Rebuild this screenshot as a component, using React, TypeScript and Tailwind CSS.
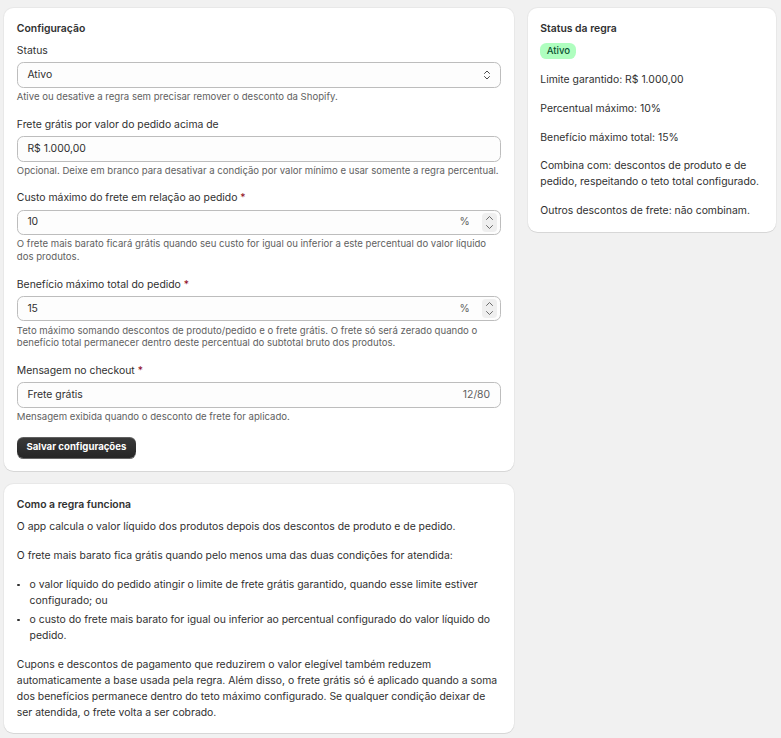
import React from "react";

function ChevUpDown() {
  return (
    <svg width="10" height="12" viewBox="0 0 10 12" fill="none" stroke="#4a4a4a" strokeWidth="1" strokeLinecap="round" strokeLinejoin="round">
      <path d="M2.5 4.5 L5 2 L7.5 4.5" />
      <path d="M2.5 7.5 L5 10 L7.5 7.5" />
    </svg>
  );
}

function Spinner() {
  return (
    <div className="flex h-[19px] w-[15px] flex-col items-center justify-between rounded-[4px] bg-[#efefef] py-[2px]">
      <svg width="9" height="6" viewBox="0 0 9 6" fill="none" stroke="#5a5a5a" strokeWidth="0.9" strokeLinecap="round" strokeLinejoin="round">
        <path d="M1.5 4.5 L4.5 1.5 L7.5 4.5" />
      </svg>
      <svg width="9" height="6" viewBox="0 0 9 6" fill="none" stroke="#5a5a5a" strokeWidth="0.9" strokeLinecap="round" strokeLinejoin="round">
        <path d="M1.5 1.5 L4.5 4.5 L7.5 1.5" />
      </svg>
    </div>
  );
}

function Label({ children, required }: { children: React.ReactNode; required?: boolean }) {
  return (
    <div className="text-[10.4px] leading-[16px] text-[#303030]">
      {children}
      {required && <span className="text-[#8e0b21]"> *</span>}
    </div>
  );
}

function Help({ children }: { children: React.ReactNode }) {
  return <div className="mt-[3.2px] text-[9.6px] leading-[12.8px] text-[#616161]">{children}</div>;
}

function Box({ children }: { children: React.ReactNode }) {
  return (
    <div className="mt-[3.2px] flex h-[25.6px] items-center rounded-[6.4px] border border-[#bdbdbd] bg-[#fdfdfd] pl-[9.6px] pr-[3px] text-[10.4px] text-[#303030]">
      {children}
    </div>
  );
}

function Bullet({ children }: { children: React.ReactNode }) {
  return (
    <li className="flex">
      <span className="flex w-[12.8px] shrink-0 pt-[7px]">
        <span className="ml-[0.5px] h-[2.6px] w-[2.6px] rounded-full bg-[#303030]" />
      </span>
      <span>{children}</span>
    </li>
  );
}

const card =
  "rounded-[9.6px] bg-white p-[12.8px] shadow-[0_1px_0_0_rgba(26,26,26,0.08),0_0_0_1px_rgba(0,0,0,0.035)]";

export default function App() {
  return (
    <div className="min-h-[738px] bg-[#f1f1f1] pl-[4px] pt-[8px] font-['Inter',sans-serif] text-[#303030]">
      <div className="grid grid-cols-[509.5px_248.8px] items-start gap-x-[14px]">
        <div className="flex flex-col gap-[12.8px]">
          <div className={card}>
            <div className="text-[10.4px] font-semibold leading-[16px]">Configuração</div>
            <div className="mt-[6.4px] flex flex-col gap-[12.8px]">
              <div>
                <Label>Status</Label>
                <Box>
                  <span className="flex-1">Ativo</span>
                  <span className="mr-[5px] flex items-center">
                    <ChevUpDown />
                  </span>
                </Box>
                <Help>Ative ou desative a regra sem precisar remover o desconto da Shopify.</Help>
              </div>
              <div>
                <Label>Frete grátis por valor do pedido acima de</Label>
                <Box>
                  <span className="flex-1">R$ 1.000,00</span>
                </Box>
                <Help>Opcional. Deixe em branco para desativar a condição por valor mínimo e usar somente a regra percentual.</Help>
              </div>
              <div>
                <Label required>Custo máximo do frete em relação ao pedido</Label>
                <Box>
                  <span className="flex-1">10</span>
                  <span className="mr-[12px] text-[#616161]">%</span>
                  <Spinner />
                </Box>
                <Help>
                  O frete mais barato ficará grátis quando seu custo for igual ou inferior a este percentual do valor líquido dos produtos.
                </Help>
              </div>
              <div>
                <Label required>Benefício máximo total do pedido</Label>
                <Box>
                  <span className="flex-1">15</span>
                  <span className="mr-[12px] text-[#616161]">%</span>
                  <Spinner />
                </Box>
                <Help>
                  Teto máximo somando descontos de produto/pedido e o frete grátis. O frete só será zerado quando o benefício total permanecer dentro deste percentual do subtotal bruto dos produtos.
                </Help>
              </div>
              <div>
                <Label required>Mensagem no checkout</Label>
                <Box>
                  <span className="flex-1">Frete grátis</span>
                  <span className="mr-[6.6px] text-[#616161]">12/80</span>
                </Box>
                <Help>Mensagem exibida quando o desconto de frete for aplicado.</Help>
              </div>
              <div className="flex">
                <button className="h-[21.6px] rounded-[6.4px] bg-gradient-to-b from-[#3a3a3a] to-[#262626] px-[9.6px] text-[9.6px] font-[650] leading-[12px] text-white shadow-[0_1px_0_0_rgba(0,0,0,0.6),inset_0_1px_0_0_rgba(255,255,255,0.2)]">
                  Salvar configurações
                </button>
              </div>
            </div>
          </div>

          <div className={card}>
            <div className="text-[10.4px] font-semibold leading-[16px]">Como a regra funciona</div>
            <div className="mt-[6.4px] flex flex-col gap-[12.8px] text-[10.4px] leading-[16px]">
              <p>O app calcula o valor líquido dos produtos depois dos descontos de produto e de pedido.</p>
              <p>O frete mais barato fica grátis quando pelo menos uma das duas condições for atendida:</p>
              <ul className="flex flex-col gap-[3.2px]">
                <Bullet>o valor líquido do pedido atingir o limite de frete grátis garantido, quando esse limite estiver configurado; ou</Bullet>
                <Bullet>o custo do frete mais barato for igual ou inferior ao percentual configurado do valor líquido do pedido.</Bullet>
              </ul>
              <p>
                Cupons e descontos de pagamento que reduzirem o valor elegível também reduzem automaticamente a base usada pela regra. Além disso, o frete grátis só é aplicado quando a soma dos benefícios permanece dentro do teto máximo configurado. Se qualquer condição deixar de ser atendida, o frete volta a ser cobrado.
              </p>
            </div>
          </div>
        </div>

        <div className={card}>
          <div className="text-[10.4px] font-semibold leading-[16px]">Status da regra</div>
          <div className="mt-[6.4px] flex">
            <span className="flex h-[16px] items-center rounded-[6.4px] bg-[#affebf] px-[6.4px] text-[9.6px] font-medium leading-[12px] text-[#0c5132]">
              Ativo
            </span>
          </div>
          <div className="mt-[12.8px] flex flex-col gap-[12.8px] text-[10.4px] leading-[16px]">
            <p>Limite garantido: R$ 1.000,00</p>
            <p>Percentual máximo: 10%</p>
            <p>Benefício máximo total: 15%</p>
            <p>Combina com: descontos de produto e de pedido, respeitando o teto total configurado.</p>
            <p>Outros descontos de frete: não combinam.</p>
          </div>
        </div>
      </div>
    </div>
  );
}
